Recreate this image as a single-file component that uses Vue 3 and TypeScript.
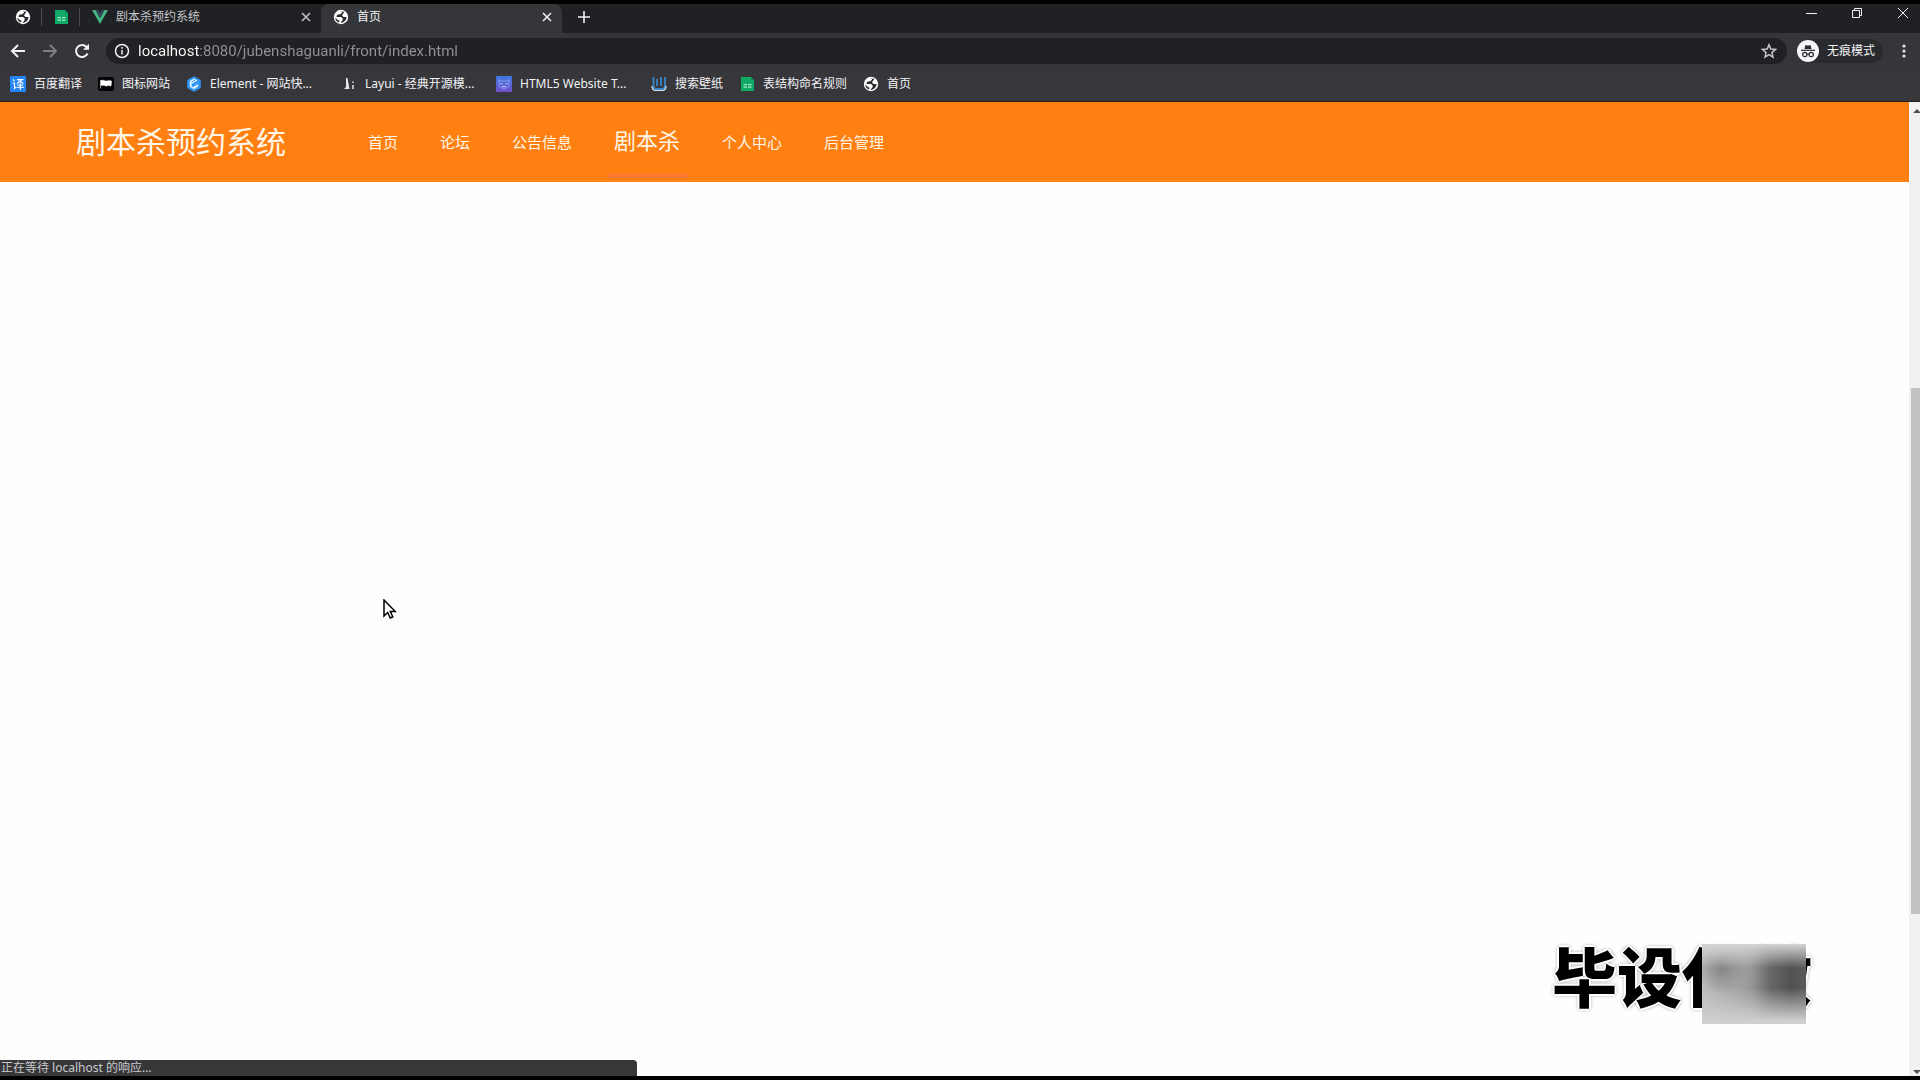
<script setup lang="ts">
import { ref } from 'vue'

interface Bookmark {
  label: string
  icon: string
  clipped?: boolean
}

interface NavItem {
  label: string
  active?: boolean
}

const url = ref('localhost:8080/jubenshaguanli/front/index.html')

const bookmarks: Bookmark[] = [
  { label: '百度翻译', icon: 'translate' },
  { label: '图标网站', icon: 'flag' },
  { label: 'Element - 网站快...', icon: 'element', clipped: true },
  { label: 'Layui - 经典开源模...', icon: 'layui', clipped: true },
  { label: 'HTML5 Website T...', icon: 'html5', clipped: true },
  { label: '搜索壁纸', icon: 'wallpaper' },
  { label: '表结构命名规则', icon: 'sheet' },
  { label: '首页', icon: 'globe' },
]

const navItems: NavItem[] = [
  { label: '首页' },
  { label: '论坛' },
  { label: '公告信息' },
  { label: '剧本杀', active: true },
  { label: '个人中心' },
  { label: '后台管理' },
]
</script>

<template>
  <div class="browser">
    <svg class="defs" width="0" height="0" aria-hidden="true">
      <symbol id="globe" viewBox="0 0 16 16">
        <circle cx="8" cy="8" r="7.200" fill="#fff" />
        <path d="M7 2.300 9.500 2l-.7 2L7 5.300l-2.800.5L3.500 8H8l1.800 1.500-.4 2-1.900 2.300c3.200.2 6-2.500 6-5.800h-3L9 6.300l2.500-3.500z" fill="#2a2b2e" />
        <path d="M2.200 8.500c.2 2.400 1.600 4.300 3.800 5l.5-1.800-2-1z" fill="#2a2b2e" />
      </symbol>
      <symbol id="sheet" viewBox="0 0 16 16">
        <path d="M2 1h10l3 3v11H2z" fill="#0fa968" />
        <path d="M12 1v3h3z" fill="#087f4c" />
        <path d="M4.500 8H8v1.300H4.500zM9 8h3.500v1.300H9zM4.500 10.500H8v1.300H4.500zM9 10.500h3.500v1.300H9z" fill="#a8e8c8" />
      </symbol>
      <symbol id="vue" viewBox="0 0 16 16">
        <path d="M0 1h3.500L8 9l4.500-8H16L8 15z" fill="#41b883" />
        <path d="M3.500 1h2.700L8 4.200 9.800 1h2.700L8 9z" fill="#34495e" />
      </symbol>
      <symbol id="translate" viewBox="0 0 16 16">
        <rect width="16" height="16" rx="1" fill="#2585f5" />
        <path d="M3 3.500 4.500 5M2.500 7h2v5.500L6 11M7 3.500h5.500L7 7.500M8 4.500l5.500 3M7.500 9h5.500M6.500 11.300h7.500M10.300 7.500V14" fill="none" stroke="#fff" stroke-width="1.100" />
      </symbol>
      <symbol id="flag" viewBox="0 0 16 16">
        <rect y="1" width="16" height="14" rx="2" fill="#050505" />
        <path d="M2.500 4v8.500M3 4.500c3-1 4 1 6 .5 1.700-.5 2.700-.5 4.500 0l-.5 5c-2-.7-3-.5-4.500 0C7 10 6 8.500 3 9.500z" fill="#fff" stroke="#fff" stroke-width=".6" />
      </symbol>
      <symbol id="element" viewBox="0 0 16 16">
        <path d="M8 .3 14.800 4v8L8 15.700 1.200 12V4z" fill="#2f96f5" />
        <path d="M8 2.600 11.500 4.500 5.500 8v2l1.500.9 5-2.900v2.500L8 13.200l-4.200-2.400V5z" fill="#e6f4ff" />
        <path d="m5.500 6.200 3.500-2M6.500 10.500l5.500-3.300" stroke="#2f96f5" />
      </symbol>
      <symbol id="layui" viewBox="0 0 16 16">
        <path d="M5 2h1.500l2 11H3l2-2z" fill="#e8e8e8" />
        <path d="M12 5.500v1.500M12 9v4" stroke="#e8e8e8" stroke-width="1.500" />
      </symbol>
      <symbol id="html5" viewBox="0 0 16 16">
        <linearGradient id="violet" x2="0" y2="1">
          <stop stop-color="#3e78dd" />
          <stop offset="1" stop-color="#7550cc" />
        </linearGradient>
        <rect width="16" height="16" fill="url(#violet)" />
        <path d="m2.500 3.500 3 1.500h5l3-1.500-1 7L8 13l-4.500-2.500z" fill="none" stroke="#7d9cf5" />
        <path d="m4.500 7 2 1.200M11.500 7l-2 1.200M6 10l2 1 2-1" fill="none" stroke="#c7d2ff" />
      </symbol>
      <symbol id="wallpaper" viewBox="0 0 16 16">
        <path d="M2.500 1v9q0 3 3 3H11q3 0 3-3V1M6 3v7M10 1v9" fill="none" stroke="#3a87c8" stroke-width="1.800" />
        <path d="M1 10q0 4.500 4 4.500h6q4 0 4-4.500" fill="none" stroke="#dceaf5" stroke-width="1.200" />
      </symbol>
    </svg>

    <div class="tab-strip" role="tablist">
      <button class="tab pinned" role="tab" aria-label="首页"><svg class="icon"><use href="#globe" /></svg></button>
      <button class="tab pinned" role="tab" aria-label="表结构"><svg class="icon"><use href="#sheet" /></svg></button>
      <div class="tab">
        <svg class="icon"><use href="#vue" /></svg>
        <button class="tab-title" role="tab">剧本杀预约系统</button>
        <button class="close" aria-label="关闭"><svg viewBox="0 0 10 10"><path d="m1 1 8 8M9 1 1 9" /></svg></button>
      </div>
      <div class="tab active">
        <svg class="icon"><use href="#globe" /></svg>
        <button class="tab-title" role="tab" aria-selected="true">首页</button>
        <button class="close" aria-label="关闭"><svg viewBox="0 0 10 10"><path d="m1 1 8 8M9 1 1 9" /></svg></button>
      </div>
      <button class="new-tab" aria-label="新标签页"><svg viewBox="0 0 12 12"><path d="M6 0v12M0 6h12" /></svg></button>
      <div class="window-controls">
        <button aria-label="最小化"><svg viewBox="0 0 12 12"><path d="M1 6.500h11" /></svg></button>
        <button aria-label="还原"><svg viewBox="0 0 12 12"><path d="M1.500 3.500h7v7h-7zM3.500 3.500v-2h7v7h-2" /></svg></button>
        <button aria-label="关闭窗口"><svg viewBox="0 0 12 12"><path d="m1 1 10 10M11 1 1 11" /></svg></button>
      </div>
    </div>

    <div class="toolbar">
      <button class="tool" aria-label="后退"><svg viewBox="0 0 16 16"><path d="M15 8H2M8 2 2 8l6 6" /></svg></button>
      <button class="tool dim" aria-label="前进"><svg viewBox="0 0 16 16"><path d="M1 8h13M8 2l6 6-6 6" /></svg></button>
      <button class="tool" aria-label="重新加载"><svg viewBox="0 0 16 16"><path d="M13.500 10.500A6 6 0 1 1 12.500 4" /><path class="solid" d="M15 .800v6H9z" /></svg></button>
      <div class="omnibox">
        <svg class="info" viewBox="0 0 16 16"><circle cx="8" cy="8" r="6.500" /><path d="M8 7v4.500M8 4v1.700" /></svg>
        <input v-model="url" class="address" type="text" aria-label="地址栏" spellcheck="false" />
        <button class="star" aria-label="添加书签"><svg viewBox="0 0 16 16"><path d="m8 1.700 1.800 4.400 4.700.4-3.600 3.100 1.100 4.600L8 11.700l-4 2.500 1.100-4.600-3.600-3.100 4.700-.4z" /></svg></button>
      </div>
      <button class="incognito">
        <svg viewBox="0 0 22 22">
          <circle cx="11" cy="11" r="11" fill="#f4f5f7" />
          <path d="M7.500 9 8.500 5l2.500.7 2.500-.7 1 4z" fill="#292a2d" />
          <path d="M4 10.300h14" stroke="#292a2d" stroke-width="1.200" />
          <g fill="none" stroke="#292a2d" stroke-width="1.200"><circle cx="7.800" cy="14.500" r="2.200" /><circle cx="14.200" cy="14.500" r="2.200" /><path d="M10 14.300q1-.8 2 0" /></g>
        </svg>
        <span>无痕模式</span>
      </button>
      <button class="more" aria-label="更多"><svg viewBox="0 0 4 16"><circle cx="2" cy="3" r="1.600" /><circle cx="2" cy="8" r="1.600" /><circle cx="2" cy="13" r="1.600" /></svg></button>
    </div>

    <nav class="bookmarks" aria-label="书签栏">
      <a v-for="b in bookmarks" :key="b.label" href="#" class="bookmark">
        <svg class="icon"><use :href="'#' + b.icon" /></svg>
        <span :class="{ clipped: b.clipped }">{{ b.label }}</span>
      </a>
    </nav>

    <div class="viewport">
      <div class="page">
        <header class="site-header">
          <a href="#" class="brand">剧本杀预约系统</a>
          <nav class="site-nav">
            <a v-for="item in navItems" :key="item.label" href="#" :class="{ current: item.active }">{{ item.label }}</a>
          </nav>
        </header>
        <main class="content"></main>
      </div>
      <div class="scrollbar" aria-hidden="true">
        <svg class="arrow" viewBox="0 0 11 16"><path d="m4 11 4-4 4 4z" /></svg>
        <div class="gap-before"></div>
        <div class="thumb"></div>
        <div class="gap-after"></div>
        <svg class="arrow" viewBox="0 0 11 16"><path d="m4 10 4 4 4-4z" /></svg>
      </div>

      <div class="watermark">毕设代做<span class="smudge"></span></div>
      <div class="status">正在等待 localhost 的响应...</div>
      <svg class="pointer" viewBox="0 0 14 21"><path d="M1 1v16l3.700-3.500 2.500 5.500 2.600-1.200-2.500-5.300h5z" /></svg>
    </div>
  </div>
</template>

<style>
body {
  margin: 0;
  background: #000;
}
</style>

<style scoped>
.browser {
  box-sizing: border-box;
  display: flex;
  flex-direction: column;
  height: 100vh;
  padding: 4px 0;
  overflow: hidden;
  background: #000;
  color: #f1f2f4;
  font-family: "Noto Sans", "Noto Sans CJK SC", sans-serif;
  font-size: 12px;
  line-height: 16px;
}

.defs {
  position: absolute;
}

button {
  display: flex;
  align-items: center;
  justify-content: center;
  padding: 0;
  border: 0;
  background: none;
  color: inherit;
  font: inherit;
}

a {
  color: inherit;
  text-decoration: none;
}

svg {
  flex: none;
}

button svg,
.info {
  fill: none;
  stroke: currentColor;
}

button .icon {
  stroke: none;
}

.icon {
  width: 16px;
  height: 16px;
}

.tab-strip {
  display: flex;
  flex: none;
  height: 29px;
  padding-left: 4px;
  background: #202124;
}

.tab {
  box-sizing: border-box;
  display: flex;
  align-items: center;
  width: 241px;
  height: 29px;
  padding: 0 10px 4px 12px;
  gap: 8px;
  color: #c3c5c9;
}

.tab.pinned {
  width: 38px;
  padding: 0 0 4px;
  background: linear-gradient(#4a4b4f, #4a4b4f) right 4px / 1px 18px no-repeat;
}

.tab.active {
  border-radius: 8px 8px 0 0;
  background: #35363a;
  color: #f1f2f4;
}

.tab-title {
  flex: 1;
  justify-content: flex-start;
}

.close svg {
  width: 10px;
  height: 10px;
  stroke-width: 1.5;
}

.new-tab {
  width: 44px;
  padding-bottom: 4px;
}

.new-tab svg {
  width: 12px;
  height: 12px;
  stroke-width: 1.6;
}

.window-controls {
  display: flex;
  margin-left: auto;
}

.window-controls button {
  width: 46px;
  padding: 0 0 11px 12px;
}

.window-controls svg {
  width: 12px;
  height: 12px;
}

.toolbar {
  display: flex;
  flex: none;
  align-items: center;
  height: 36px;
  padding-left: 10px;
  background: #35363a;
}

.tool {
  width: 16px;
  margin-right: 16px;
}

.tool svg,
.info,
.star svg {
  width: 16px;
  height: 16px;
}

.tool svg {
  stroke-width: 2;
}

.tool.dim {
  color: #7d7e82;
}

.tool .solid {
  fill: currentColor;
  stroke: none;
}

.omnibox {
  display: flex;
  flex: 1;
  align-items: center;
  height: 26px;
  padding: 0 10px 0 8px;
  border-radius: 13px;
  background: #202124;
}

.info {
  stroke-width: 1.5;
}

.address {
  flex: 1;
  min-width: 0;
  height: 26px;
  margin-left: 8px;
  padding: 0;
  border: 0;
  outline: 0;
  background: linear-gradient(90deg, #fff 61px, #929397 61px);
  background-clip: text;
  -webkit-background-clip: text;
  color: transparent;
  font: 15px/26px Roboto, sans-serif;
}

.star {
  color: #c3c5c9;
}

.star svg {
  stroke-width: 1.5;
}

.incognito {
  height: 24px;
  margin-left: 10px;
  padding-right: 8px;
  gap: 8px;
  border-radius: 12px;
  background: #292a2d;
}

.incognito svg {
  width: 22px;
  height: 22px;
  stroke: none;
}

.more {
  width: 37px;
  padding-left: 5px;
}

.more svg {
  width: 4px;
  height: 16px;
  fill: #e5e6e8;
  stroke: none;
}

.bookmarks {
  box-sizing: border-box;
  display: flex;
  flex: none;
  align-items: center;
  height: 33px;
  padding: 0 10px 2px;
  gap: 16px;
  background: #37363b;
  border-bottom: 1px solid #281b1c;
}

.bookmark {
  display: flex;
  align-items: center;
  gap: 8px;
  white-space: nowrap;
}

.clipped {
  width: 115px;
}

.viewport {
  position: relative;
  display: flex;
  flex: 1;
  min-height: 0;
  overflow: hidden;
  background: #fefefe;
}

.page {
  flex: 1;
}

.site-header {
  display: flex;
  align-items: center;
  height: 80px;
  padding-left: 76px;
  gap: 82px;
  background: #ff8011;
  color: #fff6e8;
}

.brand {
  font-size: 30px;
  line-height: 40px;
}

.site-nav {
  display: flex;
  align-items: center;
  gap: 42px;
  font-size: 15px;
  line-height: 80px;
}

.site-nav .current {
  position: relative;
  font-size: 22px;
  line-height: 76px;
  padding-bottom: 4px;
}

.current::after {
  position: absolute;
  right: -8px;
  bottom: 4px;
  left: -6px;
  height: 4px;
  background: #ff7733;
  content: "";
}

.scrollbar {
  display: flex;
  flex-direction: column;
  width: 11px;
  background: #f1f1f2;
}

.arrow {
  width: 11px;
  height: 16px;
  fill: #505050;
}

.gap-before {
  flex: 270;
}

.thumb {
  flex: 526;
  margin-left: 2px;
  background: #c1c1c2;
}

.gap-after {
  flex: 146;
}

.watermark {
  position: absolute;
  right: 108px;
  bottom: 52px;
  height: 80px;
  color: #000;
  font: 900 65px/60px "Noto Sans CJK SC", sans-serif;
  text-shadow: 2px 0 #fff, -2px 0 #fff, 0 2px #fff, 0 -2px #fff, 0 0 4px #222;
}

.smudge {
  position: absolute;
  top: 0;
  right: 6px;
  width: 104px;
  height: 80px;
  background:
    linear-gradient(#d4d4d4 0%, transparent 30%, transparent 55%, #cfcfcf 96%),
    radial-gradient(circle at 20px 24px, #868686, transparent 26px),
    linear-gradient(90deg, #bcbcbc, #a4a4a4 35%, #969696 48%, #676767 66%, #525252 85%, #5a5a5a);
}

.status {
  position: absolute;
  bottom: 0;
  left: 0;
  box-sizing: border-box;
  width: 637px;
  padding: 0 1px;
  border-radius: 0 4px 0 0;
  background: #37373a;
  color: #c9cacc;
  line-height: 16px;
}

.pointer {
  position: absolute;
  top: 497px;
  left: 383px;
  width: 14px;
  height: 21px;
  fill: #fff;
  stroke: #000;
  stroke-width: 1.5;
}
</style>
